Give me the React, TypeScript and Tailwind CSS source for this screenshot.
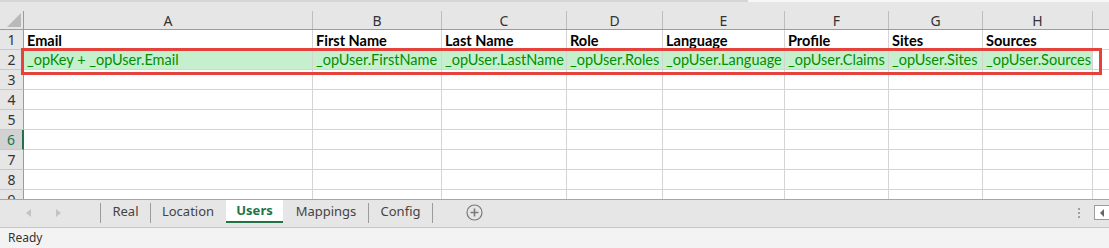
import React from 'react';

const COLS = [
  { key: 'A', w: 'w-[289px]' },
  { key: 'B', w: 'w-[129px]' },
  { key: 'C', w: 'w-[125px]' },
  { key: 'D', w: 'w-[96px]' },
  { key: 'E', w: 'w-[122px]' },
  { key: 'F', w: 'w-[104px]' },
  { key: 'G', w: 'w-[94px]' },
  { key: 'H', w: 'w-[110px]' },
];

const HEADERS = ['Email', 'First Name', 'Last Name', 'Role', 'Language', 'Profile', 'Sites', 'Sources'];
const VALUES = [
  '_opKey + _opUser.Email',
  '_opUser.FirstName',
  '_opUser.LastName',
  '_opUser.Roles',
  '_opUser.Language',
  '_opUser.Claims',
  '_opUser.Sites',
  '_opUser.Sources',
];

const cellFont = "font-['Lato','Open_Sans',sans-serif] text-[14.5px] leading-none";
const uiFont = "font-['Noto_Sans','Open_Sans',sans-serif]";

// sheet tabs with the width each one takes in the strip
const TABS = [
  { name: 'Real', w: 'w-[49px]' },
  { name: 'Location', w: 'w-[74px]' },
  { name: 'Users', w: 'w-[57px]' },
  { name: 'Mappings', w: 'w-[84px]' },
  { name: 'Config', w: 'w-[63px]' },
];

function Row({ n, children, selected }: { n: number; children?: React.ReactNode; selected?: boolean }) {
  return (
    <div className="flex h-[20px] shrink-0">
      <div
        className={`w-[24px] shrink-0 border-b border-[#c8c8c8] flex items-end justify-center pb-[2px] text-[14px] leading-none ${uiFont} ${
          selected
            ? 'bg-[#d2d2d2] text-[#217346] border-r-2 border-r-[#217346]'
            : 'bg-[#e6e6e6] text-[#333] border-r border-r-[#9b9b9b]'
        }`}
      >
        {n}
      </div>
      {children ??
        COLS.map((c) => <div key={c.key} className={`${c.w} shrink-0 border-r border-b border-[#d4d4d4]`} />)}
      <div className="flex-1 border-b border-[#d4d4d4]" />
    </div>
  );
}

export default function App() {
  return (
    <div className="w-[1109px] h-[248px] flex flex-col overflow-hidden bg-white">
      {/* sliver of the formula bar area */}
      <div className="h-[11px] shrink-0 flex">
        <div className="w-[748px] bg-[#e6e6e6] border-t-2 border-[#d6d6d6]" />
        <div className="flex-1 bg-[#e6e6e6] border-t-2 border-[#f7f7f7]" />
      </div>

      {/* grid */}
      <div className="relative flex-1 flex flex-col overflow-hidden">
        <div className="flex h-[19px] shrink-0 bg-[#e6e6e6] border-b border-[#9b9b9b]">
          <div className="w-[24px] shrink-0 border-r border-[#9b9b9b] relative overflow-hidden">
            <div className="absolute right-[2px] bottom-[2px] w-0 h-0 border-l-[14px] border-l-transparent border-b-[14px] border-b-[#b9b9b9]" />
          </div>
          {COLS.map((c) => (
            <div
              key={c.key}
              className={`${c.w} shrink-0 border-r border-[#bdbdbd] flex items-center justify-center text-[14px] text-[#333] ${uiFont}`}
            >
              {c.key}
            </div>
          ))}
          <div className="flex-1" />
        </div>

        <Row n={1}>
          {COLS.map((c, i) => (
            <div
              key={c.key}
              className={`${c.w} shrink-0 border-r border-b border-[#d4d4d4] px-[3px] flex items-end pb-[1px] font-bold text-black whitespace-nowrap overflow-hidden ${cellFont}`}
            >
              {HEADERS[i]}
            </div>
          ))}
        </Row>
        <Row n={2}>
          {COLS.map((c, i) => (
            <div
              key={c.key}
              className={`${c.w} shrink-0 border-r border-b border-[#d4d4d4] bg-[#c6efce] px-[3px] flex items-end pb-[2px] text-[#008f00] whitespace-nowrap overflow-hidden ${cellFont}`}
            >
              {VALUES[i]}
            </div>
          ))}
        </Row>
        {[3, 4, 5, 6, 7, 8, 9].map((n) => (
          <Row key={n} n={n} selected={n === 6} />
        ))}

        {/* highlight rectangle around row 2 */}
        <div className="absolute left-[21px] top-[37px] w-[1081px] h-[27px] border-[3px] border-[#e5423b] pointer-events-none" />
      </div>

      {/* sheet tabs */}
      <div className={`h-[28px] shrink-0 bg-[#e6e6e6] border-t border-[#a6a6a6] flex items-stretch ${uiFont}`}>
        <div className="w-[100px] shrink-0 flex items-center pl-[26px] gap-[25px] pb-[2px]">
          <span className="w-0 h-0 border-y-[4px] border-y-transparent border-r-[5px] border-r-[#c3c3c3]" />
          <span className="w-0 h-0 border-y-[4px] border-y-transparent border-l-[5px] border-l-[#c3c3c3]" />
        </div>
        <div className="flex items-stretch">
          {TABS.map((t, i) => {
            const active = t.name === 'Users';
            const prevActive = TABS[i - 1]?.name === 'Users';
            return (
              <div key={t.name} className="flex items-stretch">
                {active || prevActive ? (
                  <div className="w-px" />
                ) : (
                  <div className="w-px bg-[#9b9b9b] my-[3px] mb-[4px]" />
                )}
                {active ? (
                  <div
                    className={`${t.w} bg-white border-b-2 border-[#217346] flex items-center justify-center text-[13px] font-bold text-[#217346] mb-[4px] pt-[1px]`}
                  >
                    {t.name}
                  </div>
                ) : (
                  <div className={`${t.w} flex items-center justify-center text-[13px] text-[#444] pb-[3px]`}>{t.name}</div>
                )}
              </div>
            );
          })}
          <div className="w-px bg-[#9b9b9b] my-[3px] mb-[4px]" />
        </div>
        <div className="pl-[33px] flex items-center pb-[2px]">
          <svg width="17" height="17" viewBox="0 0 17 17">
            <circle cx="8.5" cy="8.5" r="7.5" fill="none" stroke="#7a7a7a" strokeWidth="1.2" />
            <path d="M8.5 4.5v8M4.5 8.5h8" stroke="#7a7a7a" strokeWidth="1.6" />
          </svg>
        </div>
        <div className="flex-1" />
        <div className="flex flex-col justify-center gap-[2px] pr-[14px] pb-[2px]">
          <span className="w-[2px] h-[2px] bg-[#a0a0a0]" />
          <span className="w-[2px] h-[2px] bg-[#a0a0a0]" />
          <span className="w-[2px] h-[2px] bg-[#a0a0a0]" />
        </div>
        <div className="flex items-center pb-[2px]">
          <div className="w-[15px] h-[15px] bg-white border border-[#9b9b9b] border-r-0 flex items-center justify-center">
            <span className="w-0 h-0 border-y-[4px] border-y-transparent border-r-[4px] border-r-[#666]" />
          </div>
        </div>
      </div>

      {/* status bar */}
      <div className={`h-[21px] shrink-0 bg-[#f3f3f3] border-t border-[#c6c6c6] flex items-center pl-[8px] text-[12px] text-[#333] ${uiFont}`}>
        Ready
      </div>
    </div>
  );
}
